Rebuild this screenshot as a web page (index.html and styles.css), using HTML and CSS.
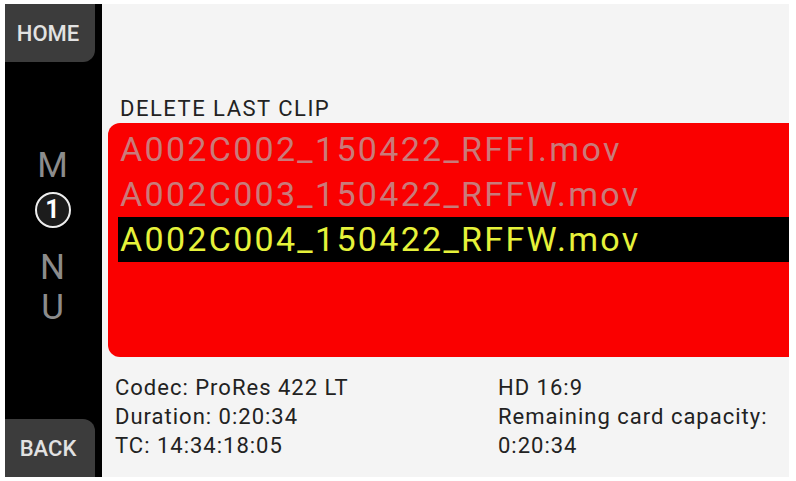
FILE: index.html
```html
<!doctype html>
<html lang='en-US'>
  <head>
    <title>Delete Last Clip</title>
    <meta charset='UTF-8'>
    <meta name='viewport' content='width=device-width, initial-scale=1'>
    <link rel="stylesheet" href="styles.css">
  </head>
  <body>
<main class=screen>
  <nav class=side>
    <div class=softkey>HOME</div>
    <div class=menu>
      <span>M</span>
      <span class=badge>1</span>
      <span class=gap>N</span>
      <span>U</span>
    </div>
    <div class="softkey back">BACK</div>
  </nav>
  <section class=content>
    <h1 class=title>DELETE LAST CLIP</h1>
    <ul class=clips>
      <li>A002C002_150422_RFFI.mov</li>
      <li>A002C003_150422_RFFW.mov</li>
      <li class=selected>A002C004_150422_RFFW.mov</li>
    </ul>
    <div class=info>
      <div class=col>
        <p>Codec: ProRes 422 LT</p>
        <p>Duration: 0:20:34</p>
        <p>TC: 14:34:18:05</p>
      </div>
      <div class=col>
        <p>HD 16:9</p>
        <p>Remaining card capacity:</p>
        <p>0:20:34</p>
      </div>
    </div>
  </section>
</main>
  </body>
</html>
```

FILE: styles.css
```css
html, body {
  margin: 0;
  background: #fff;
  font-family: Roboto, "Liberation Sans", sans-serif;
}
.screen {
  margin: 4px 0 0 5px;
  width: 784px;
  height: 473px;
  display: flex;
  background: #f4f4f4;
}
.side {
  flex: none;
  width: 97px;
  background: #000;
  display: flex;
  flex-direction: column;
}
.softkey {
  width: 90px;
  height: 58px;
  box-sizing: border-box;
  background: #3c3c3c;
  color: #e2e2e2;
  font-size: 22px;
  font-weight: 500;
  display: flex;
  align-items: center;
  justify-content: center;
  padding-right: 4px;
  border-bottom-right-radius: 12px;
}
.back {
  margin-top: auto;
  border-bottom-right-radius: 0;
  border-top-right-radius: 12px;
}
.menu {
  display: flex;
  flex-direction: column;
  align-items: center;
  color: #8c8c8c;
  font-size: 35px;
  line-height: 40px;
  padding-right: 2px;
  margin-top: 84px;
}
.menu .gap {
  margin-top: 20px;
}
.badge {
  width: 32px;
  height: 32px;
  border: 2px solid #eee;
  border-radius: 50%;
  background: #1c1c1c;
  color: #fff;
  font-size: 25px;
  font-weight: 700;
  line-height: 32px;
  text-align: center;
  margin-top: 6px;
}
.content {
  flex: 1;
  min-width: 0;
  display: flex;
  flex-direction: column;
  padding-top: 92px;
}
.title {
  margin: 0 0 2px 18px;
  font-size: 22px;
  font-weight: 400;
  color: #222;
  line-height: 25px;
  letter-spacing: 1.5px;
}
.clips {
  list-style: none;
  margin: 0 0 0 6px;
  padding: 4px 0 0 10px;
  height: 234px;
  box-sizing: border-box;
  background: #fa0000;
  border-radius: 12px 0 0 12px;
}
.clips li {
  font-size: 34px;
  line-height: 45px;
  color: #c97a7a;
  padding-left: 2px;
  letter-spacing: 2.3px;
  white-space: nowrap;
}
.clips .selected {
  background: #000;
  color: #e6f23a;
}
.info {
  display: flex;
  padding: 16px 0 0 13px;
}
.col {
  width: 383px;
}
.col + .col {
  width: auto;
}
.col p {
  margin: 0;
  font-size: 22px;
  line-height: 29px;
  color: #222;
  letter-spacing: 1px;
  white-space: nowrap;
}
```
